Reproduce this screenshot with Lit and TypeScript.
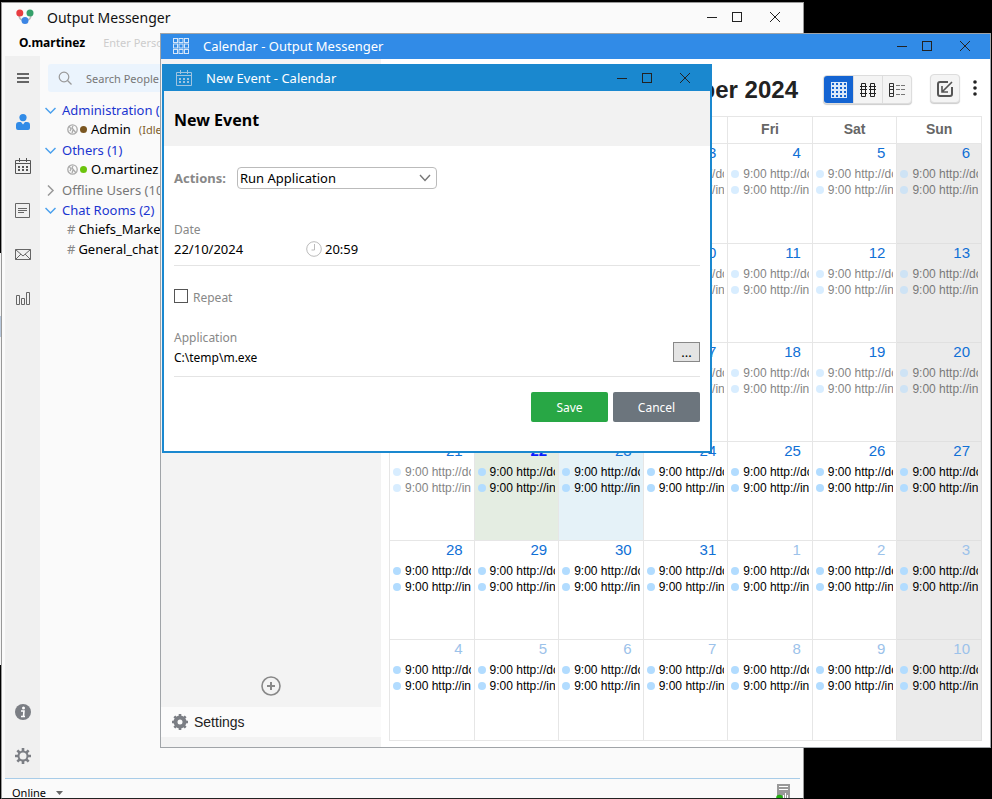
import { LitElement, html, svg, css } from "lit";
import { customElement } from "lit/decorators.js";
import { classMap } from "lit/directives/class-map.js";

const windowControls = () => html`
  <div class="controls">
    <button type="button" aria-label="Minimize">
      <svg width="10" height="10" viewBox="0 0 10 10"><path d="M0 5.5H10" stroke="#222" /></svg>
    </button>
    <button type="button" aria-label="Maximize">
      <svg width="10" height="10" viewBox="0 0 10 10"><rect x=".5" y=".5" width="9" height="9" fill="none" stroke="#222" /></svg>
    </button>
    <button type="button" class="close" aria-label="Close">
      <svg width="10" height="10" viewBox="0 0 10 10"><path d="M0 0L10 10M10 0L0 10" stroke="#222" /></svg>
    </button>
  </div>
`;

const controlStyles = css`
  * { box-sizing: border-box; }
  button, input, select { font: inherit; color: inherit; margin: 0; padding: 0; }
  button { border: 0; background: none; display: inline-flex; align-items: center; justify-content: center; }
  svg { display: block; flex: none; }
  .controls { display: flex; align-items: center; gap: 15px; margin-left: auto; flex: none; }
  .controls .close { margin-left: 13px; }
`;

const calendarIcon = (color: string) => html`
  <svg width="16" height="16" viewBox="0 0 16 16" fill="none" stroke=${color}>
    <path d="M.5 2.5H15.5V15.5H.5ZM.5 5.5H15.5M4.5 0V4M11.5 0V4" />
    <path d="M3 9H13M3 12H13" stroke-width="2" stroke-dasharray="2 2" />
  </svg>
`;

const gearIcon = (core: number) => html`
  <svg width="16" height="16" viewBox="0 0 16 16" fill="none" stroke="#7b7e84">
    <circle cx="8" cy="8" r="4.5" stroke-width=${core} />
    ${[0, 45, 90, 135].map(
      (a) => svg`<path d="M8 0V3M8 13V16" stroke-width="2.6" transform="rotate(${a} 8 8)" />`
    )}
  </svg>
`;

@customElement("contact-list")
class ContactList extends LitElement {
  static styles = [
    controlStyles,
    css`
      :host { display: block; padding: 8px; font-size: 13px; min-width: 0; flex: 1; }
      .search { display: flex; align-items: center; gap: 13px; height: 28px; padding-left: 10px; border-radius: 3px; background: #ebf4fd; }
      .search input { border: 0; background: none; outline: 0; flex: 1; min-width: 0; font-size: 11px; }
      .search input::placeholder { color: #777; opacity: 1; }
      ul { list-style: none; margin: 0; padding: 0; }
      .tree { padding-top: 8px; margin-left: -3px; }
      .group { display: flex; align-items: center; gap: 6px; height: 20px; color: #1a35d0; }
      .group.off { color: #777; }
      .item { display: flex; align-items: center; height: 20px; padding: 0 0 2px 22px; gap: 3px; color: #000; white-space: nowrap; }
      .hash { color: #888; }
      .dot { width: 7px; height: 7px; border-radius: 50%; margin: 0 1px 0 -1px; }
      .brown { background: #7a5620; }
      .green { background: #6bc40c; }
      .idle { color: #80602c; font-size: 11px; margin-left: 5px; }
    `,
  ];

  private chevron(open: boolean) {
    return html`<svg width="11" height="11" viewBox="0 0 11 11" fill="none" stroke=${open ? "#4aa0ee" : "#999"} stroke-width="1.5">
      <path d=${open ? "M.5 3L5.5 8L10.5 3" : "M3 .5L8 5.5L3 10.5"} />
    </svg>`;
  }

  private person(name: string, tone: string, note = "") {
    return html`<li class="item">
      <svg width="11" height="11" viewBox="0 0 11 11" fill="none" stroke="#aaa" stroke-width="1.3">
        <circle cx="5.5" cy="5.5" r="4.7" /><path d="M2 2L4 5L3 7M6 2L5 4L9 9M5 9L6 6" />
      </svg>
      <span class="dot ${tone}"></span><span>${name}</span>
      ${note ? html`<span class="idle">${note}</span>` : ""}
    </li>`;
  }

  private room(name: string) {
    return html`<li class="item"><span class="hash">#</span><span>${name}</span></li>`;
  }

  render() {
    return html`
      <label class="search">
        <svg width="15" height="15" viewBox="0 0 15 15" fill="none" stroke="#999" stroke-width="1.2">
          <circle cx="6" cy="6" r="4.8" /><path d="M9.5 9.5L13.5 13.5" />
        </svg>
        <input type="text" placeholder="Search People" aria-label="Search People" />
      </label>
      <ul class="tree">
        <li class="group">${this.chevron(true)}Administration (1)</li>
        ${this.person("Admin", "brown", "(Idle)")}
        <li class="group">${this.chevron(true)}Others (1)</li>
        ${this.person("O.martinez", "green")}
        <li class="group off">${this.chevron(false)}Offline Users (10)</li>
        <li class="group">${this.chevron(true)}Chat Rooms (2)</li>
        ${this.room("Chiefs_Marketing_chat")}
        ${this.room("General_chat")}
      </ul>
    `;
  }
}

interface Day { n: number; past?: boolean; next?: boolean; today?: boolean; picked?: boolean; }

const WEEKDAYS = ["Mon", "Tue", "Wed", "Thu", "Fri", "Sat", "Sun"];
const EVENTS = ["9:00 http://do", "9:00 http://in"];
const WEEKS: Day[][] = Array.from({ length: 6 }, (_, w) =>
  Array.from({ length: 7 }, (_, d) => {
    const i = w * 7 + d;
    if (i === 0) return { n: 30, past: true };
    if (i > 31) return { n: i - 31, next: true };
    return { n: i, past: i < 22, today: i === 22, picked: i === 23 };
  })
);

@customElement("calendar-window")
class CalendarWindow extends LitElement {
  static styles = [
    controlStyles,
    css`
      :host { display: flex; flex-direction: column; border: 1px solid #a0a4a8; background: #fff; }
      .title { display: flex; align-items: center; height: 25px; flex: none; padding: 0 20px 2px 12px; background: #318be7; color: #fff; font-size: 13px; gap: 14px; }
      .body { display: flex; flex: 1; min-height: 0; }
      .side { width: 220px; flex: none; background: #f3f3f3; display: flex; flex-direction: column; justify-content: flex-end; padding-bottom: 10px; font-family: "Liberation Sans", Arial, sans-serif; }
      .add { align-self: center; margin-bottom: 11px; }
      .settings { display: flex; align-items: center; justify-content: flex-start; gap: 6px; height: 30px; padding-left: 11px; background: #fbfbfb; color: #222; font-size: 14px; }
      .main { flex: 1; min-width: 0; padding: 0 8px 6px 8px; display: flex; flex-direction: column; font-family: "Liberation Sans", Arial, sans-serif; }
      .bar { display: flex; align-items: center; justify-content: flex-end; height: 57px; flex: none; padding: 4px 5px 0 0; }
      h2 { margin: 0; font-size: 24px; color: #222; padding-right: 25px; }
      .views { display: flex; height: 29px; border-radius: 4px; overflow: hidden; border: 1px solid #ddd; background: #f4f4f4; box-shadow: 0 1px 1px #ccc; }
      .views button { width: 29px; }
      .views button + button { border-left: 1px solid #ddd; }
      .views .on { background: #1464d2; }
      .edit { width: 30px; height: 29px; margin: 0 13px 2px 18px; border: 1px solid #ddd; border-radius: 4px; background: #f4f4f4; box-shadow: 0 1px 1px #ccc; }
      .more { width: 4px; margin-bottom: 4px; }
      .grid { flex: 1; min-height: 0; }
      table { width: 100%; height: 100%; border-collapse: collapse; table-layout: fixed; }
      th { height: 27px; border: 1px solid #e6e6e6; padding: 0 0 2px; font-size: 14px; color: #666; }
      tbody tr:not(:last-child) { height: 99px; }
      tbody tr:first-child { height: 100px; }
      td { border: 1px solid #e6e6e6; padding: 0 3px; vertical-align: top; overflow: hidden; font-size: 12px; color: #000; }
      td:last-child { background: #ebebeb; border-color: #e0e0e0; }
      .today { background: #e4ede2; }
      .picked { background: #e5f2f8; }
      .num { text-align: right; font-size: 15px; line-height: 18px; padding-right: 8px; margin-bottom: 4px; color: #1070d6; }
      .next .num { color: #9cc2ea; }
      .today .num { font-weight: bold; color: #0a20ff; }
      .event { display: flex; align-items: center; gap: 4px; height: 16px; white-space: nowrap; overflow: hidden; }
      .event::before { content: ""; width: 8px; height: 8px; border-radius: 50%; background: #b2dcff; flex: none; }
      .past .event { opacity: .5; }
    `,
  ];

  render() {
    return html`
      <div class="title">
        <svg width="16" height="16" viewBox="0 0 16 16" fill="none" stroke="#d6e6f8">
          ${[0.5, 6, 11.5].map((y) => [0.5, 6, 11.5].map((x) => svg`<rect x=${x} y=${y} width="4" height="4" />`))}
        </svg>
        <span>Calendar - Output Messenger</span>
        ${windowControls()}
      </div>
      <div class="body">
        <div class="side">
          <button class="add" type="button" aria-label="Add calendar">
            <svg width="20" height="20" viewBox="0 0 20 20" fill="none" stroke="#888" stroke-width="1.6">
              <circle cx="10" cy="10" r="9" /><path d="M10 6V14M6 10H14" stroke-width="2" />
            </svg>
          </button>
          <button class="settings" type="button">${gearIcon(4)}Settings</button>
        </div>
        <div class="main">
          <div class="bar">
            <h2>October 2024</h2>
            <div class="views">
              <button class="on" type="button" aria-label="Month">
                <svg width="16" height="16" viewBox="0 0 16 16" fill="none" stroke="#fff">
                  ${[0.5, 4.5, 8.5, 12.5].map((y) => [0.5, 4.5, 8.5, 12.5].map((x) => svg`<rect x=${x} y=${y} width="3" height="3" stroke-opacity=".85" />`))}
                </svg>
              </button>
              <button type="button" aria-label="Week">
                <svg width="16" height="14" viewBox="0 0 16 14" fill="none" stroke="#222">
                  <path d="M1.5 .5H5.5V13.5H1.5ZM10.5 .5H14.5V13.5H10.5ZM0 3.5H7M0 6.5H7M0 10.5H7M9 3.5H16M9 6.5H16M9 10.5H16" />
                </svg>
              </button>
              <button type="button" aria-label="Agenda">
                <svg width="16" height="14" viewBox="0 0 16 14" fill="none" stroke="#333">
                  <path d="M.5 .5H4.5V13.5H.5ZM.5 3.5H4.5M.5 6.5H4.5M.5 10.5H4.5" />
                  <path d="M7 2.5H11M12 2.5H16M7 6.5H11M12 6.5H16M7 11.5H11M12 11.5H16" stroke="#777" />
                </svg>
              </button>
            </div>
            <button class="edit" type="button" aria-label="Import">
              <svg width="18" height="18" viewBox="0 0 18 18" fill="none" stroke="#555" stroke-width="2">
                <path d="M12 2H4Q2 2 2 4V14Q2 16 4 16H14Q16 16 16 14V7" /><path d="M16 2L6 12M6 6V12H12" stroke-width="1.6" />
              </svg>
            </button>
            <button class="more" type="button" aria-label="More">
              <svg width="4" height="16" viewBox="0 0 4 16" fill="#222"><circle cx="2" cy="2" r="1.8" /><circle cx="2" cy="8" r="1.8" /><circle cx="2" cy="14" r="1.8" /></svg>
            </button>
          </div>
          <div class="grid">
            <table>
              <thead><tr>${WEEKDAYS.map((d) => html`<th scope="col">${d}</th>`)}</tr></thead>
              <tbody>
                ${WEEKS.map((week) => html`<tr>
                  ${week.map((d) => html`<td class=${classMap({ past: !!d.past, next: !!d.next, today: !!d.today, picked: !!d.picked })}>
                    <div class="num">${d.n}</div>
                    ${EVENTS.map((e) => html`<div class="event">${e}</div>`)}
                  </td>`)}
                </tr>`)}
              </tbody>
            </table>
          </div>
        </div>
      </div>
    `;
  }
}

@customElement("event-dialog")
class EventDialog extends LitElement {
  static styles = [
    controlStyles,
    css`
      :host { display: block; border: 2px solid #1a88cf; border-top: 0; background: #fff; font-size: 13px; color: #000; }
      .title { display: flex; align-items: center; height: 27px; padding: 0 20px 0 12px; background: #1a88cf; color: #fff; gap: 14px; }
      h1 { margin: 0; height: 55px; line-height: 58px; padding-left: 10px; font-size: 16px; background: #f2f2f2; }
      form { padding: 21px 10px 29px; }
      label { color: #888; font-size: 12px; }
      .actions { display: flex; align-items: center; gap: 12px; height: 22px; }
      .actions label { font-weight: bold; font-size: 13px; width: 51px; }
      .pick { position: relative; display: flex; }
      select { appearance: none; width: 200px; height: 22px; border: 1px solid #bbb; border-radius: 4px; background: #fff; padding-left: 2px; }
      .pick svg { position: absolute; right: 6px; top: 7px; pointer-events: none; }
      .field { border-bottom: 1px solid #e4e4e4; }
      .field label { display: block; height: 20px; line-height: 22px; }
      .line { display: flex; align-items: center; height: 20px; }
      .line input { border: 0; outline: 0; background: none; width: 132px; height: 20px; }
      .line .time { width: 60px; margin-left: 3px; }
      .date { margin-top: 30px; height: 47px; }
      .repeat { display: flex; align-items: center; gap: 5px; margin: 21px 0 20px; height: 20px; }
      .repeat input { appearance: none; width: 14px; height: 14px; border: 1px solid #555; background: #fff; margin-bottom: 2px; }
      .app { height: 50px; }
      .line .path { flex: 1; font-size: 12px; }
      .browse { width: 27px; height: 20px; border: 1px solid #888; background: #e4e4e4; align-self: flex-end; margin-bottom: 5px; line-height: 18px; }
      .foot { display: flex; justify-content: flex-end; gap: 5px; margin-top: 15px; }
      .foot button { height: 30px; color: #fff; border-radius: 2px; font-size: 12px; }
      .save { background: #28a745; width: 77px; }
      .cancel { background: #6c757d; width: 87px; }
    `,
  ];

  render() {
    return html`
      <div class="title">${calendarIcon("#9fc4e0")}<span>New Event - Calendar</span>${windowControls()}</div>
      <h1>New Event</h1>
      <form>
        <div class="actions">
          <label for="action">Actions:</label>
          <div class="pick">
            <select id="action"><option>Run Application</option></select>
            <svg width="12" height="8" viewBox="0 0 12 8" fill="none" stroke="#777" stroke-width="1.4"><path d="M1 1L6 6.5L11 1" /></svg>
          </div>
        </div>
        <div class="field date">
          <label for="date">Date</label>
          <div class="line">
            <input id="date" type="text" .value=${"22/10/2024"} />
            <svg width="16" height="16" viewBox="0 0 16 16" fill="none" stroke="#bbb"><circle cx="8" cy="8" r="7.3" /><path d="M8.5 3V9H5.5" /></svg>
            <input class="time" type="text" aria-label="Time" .value=${"20:59"} />
          </div>
        </div>
        <div class="repeat"><input id="repeat" type="checkbox" /><label for="repeat">Repeat</label></div>
        <div class="field app">
          <label for="path">Application</label>
          <div class="line">
            <input class="path" id="path" type="text" .value=${"C:\\temp\\m.exe"} />
            <button class="browse" type="button" aria-label="Browse">...</button>
          </div>
        </div>
        <div class="foot">
          <button class="save" type="button">Save</button>
          <button class="cancel" type="button">Cancel</button>
        </div>
      </form>
    `;
  }
}

@customElement("app-root")
class AppRoot extends LitElement {
  static styles = [
    controlStyles,
    css`
      :host { display: block; position: relative; height: 100vh; overflow: hidden; background: #000; font-family: "Noto Sans", "Open Sans", sans-serif; }
      .desk { height: 100%; padding: 2px 188px 0 1px; background: linear-gradient(#000 0 253px, #f4f4f4 253px 316px, #b8c8dc 316px 337px, #f4f4f4 337px 665px, #000 665px) left / 1px 100% no-repeat; }
      .messenger { height: 100%; display: flex; flex-direction: column; background: #fafafa; border: 1px solid #999; border-bottom-color: #222; padding-left: 3px; overflow: hidden; }
      .title { display: flex; align-items: center; height: 30px; flex: none; gap: 13px; padding: 0 23px 2px 11px; font-size: 14px; color: #111; }
      .me { display: flex; align-items: center; gap: 18px; height: 23px; flex: none; padding: 0 0 5px 14px; font-size: 12px; }
      .me span { color: #ccc; font-size: 11px; }
      .body { display: flex; flex: 1; min-height: 0; }
      nav { width: 35px; flex: none; background: #f0f0f0; display: flex; flex-direction: column; }
      nav button { height: 44px; flex: none; }
      nav .low { margin-top: auto; }
      .status { display: flex; align-items: center; height: 20px; flex: none; padding: 8px 10px 0 7px; margin-right: 3px; border-top: 1px solid #a8cce8; font-size: 11px; color: #000; gap: 10px; }
      .status svg:last-child { margin-left: auto; }
      calendar-window { position: absolute; left: 160px; right: 1px; top: 33px; bottom: 51px; }
      event-dialog { position: absolute; left: 162px; right: 280px; top: 64px; }
    `,
  ];

  render() {
    return html`
      <div class="desk">
        <div class="messenger">
          <div class="title">
            <svg width="18" height="16" viewBox="0 0 18 16">
              <path d="M3 7Q4 11 7 11M15 7Q14 11 11 11" fill="none" stroke="#bbb" stroke-width="1.5" />
              <circle cx="3.8" cy="4" r="3.5" fill="#e83c40" /><circle cx="14" cy="4" r="3.5" fill="#35a06a" /><circle cx="9" cy="11.5" r="3.5" fill="#3c85e4" />
            </svg>
            <span>Output Messenger</span>
            ${windowControls()}
          </div>
          <div class="me"><b>O.martinez</b><span>Enter Personal Message</span></div>
          <div class="body">
            <nav>
              <button type="button" aria-label="Menu">
                <svg width="12" height="10" viewBox="0 0 12 10" stroke="#666" stroke-width="2"><path d="M0 1H12M0 5H12M0 9H12" /></svg>
              </button>
              <button type="button" aria-label="Contacts">
                <svg width="14" height="16" viewBox="0 0 14 16" fill="#318be7">
                  <circle cx="7" cy="3.6" r="3.6" /><path d="M0 14V11Q0 8 3 8H5L7 10.500L9 8H11Q14 8 14 11V14Q14 16 12 16H2Q0 16 0 14Z" />
                </svg>
              </button>
              <button type="button" aria-label="Calendar">${calendarIcon("#555")}</button>
              <button type="button" aria-label="Notes">
                <svg width="15" height="15" viewBox="0 0 15 15" fill="none" stroke="#666"><path d="M.5 .5H14.5V14.5H.5ZM3 5.5H12M3 7.5H12M3 9.5H9" /></svg>
              </button>
              <button type="button" aria-label="Mail">
                <svg width="16" height="11" viewBox="0 0 16 11" fill="none" stroke="#666"><path d="M.5 .5H15.5V10.5H.5ZM.5 .5L8 7L15.5 .5M.5 10.5L6 5M15.5 10.5L10 5" /></svg>
              </button>
              <button type="button" aria-label="Reports">
                <svg width="14" height="13" viewBox="0 0 14 13" fill="none" stroke="#666"><path d="M.5 3.5H3.5V12.5H.5ZM5.5 6.5H8.5V12.5H5.5ZM10.5 .5H13.5V12.5H10.5Z" /></svg>
              </button>
              <button class="low" type="button" aria-label="About">
                <svg width="16" height="16" viewBox="0 0 16 16">
                  <circle cx="8" cy="8" r="8" fill="#7b7e84" /><circle cx="8.5" cy="4" r="1.5" fill="#fff" /><path d="M6 7H9L8.5 12.5H10M6 12.5H8.5" stroke="#fff" stroke-width="1.6" fill="none" />
                </svg>
              </button>
              <button type="button" aria-label="Settings">${gearIcon(2)}</button>
            </nav>
            <contact-list></contact-list>
          </div>
          <div class="status">
            <span>Online</span>
            <svg width="7" height="4" viewBox="0 0 7 4"><path d="M0 0H7L3.5 4Z" fill="#666" /></svg>
            <svg width="14" height="18" viewBox="0 0 14 18">
              <path d="M1 0H14V18H1Z" fill="#999" /><path d="M3 2.5H12M3 5.5H12M7.5 11V18M9.5 9V18M11.5 11V18" stroke="#fff" /><circle cx="3.5" cy="14" r="3.3" fill="#21b010" />
            </svg>
          </div>
        </div>
      </div>
      <calendar-window></calendar-window>
      <event-dialog></event-dialog>
    `;
  }
}
